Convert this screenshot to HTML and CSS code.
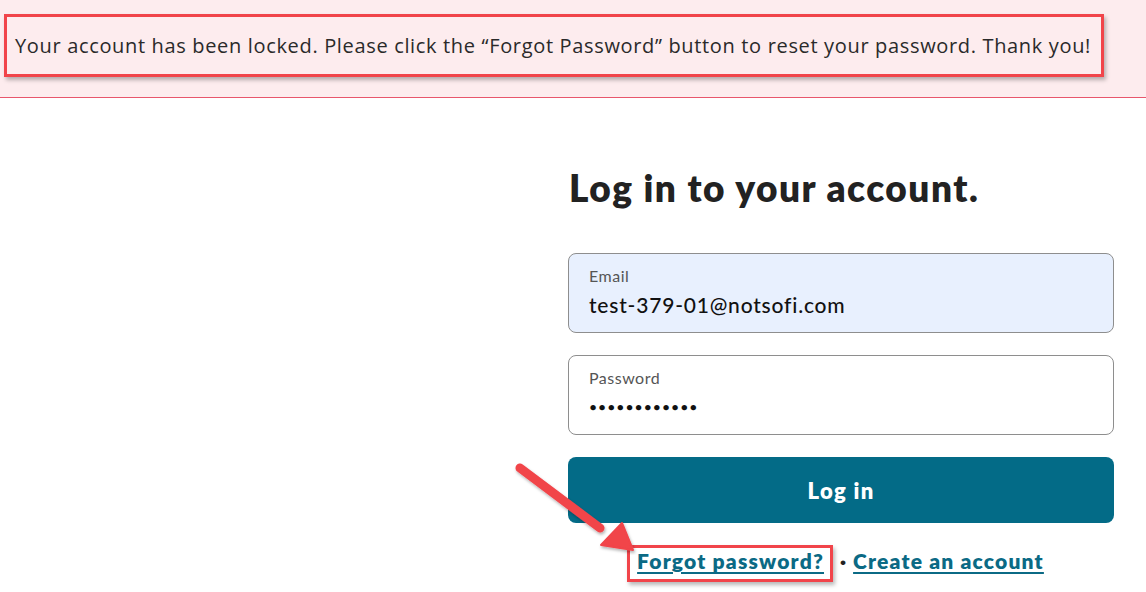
FILE: index.html
```html
<!DOCTYPE html>
<html>
<head>
<meta charset="utf-8">
<link rel="stylesheet" href="styles.css">
</head>
<body>
<div class="banner">
  <div class="notice">Your account has been locked. Please click the “Forgot Password” button to reset your password. Thank you!</div>
</div>
<main class="page">
  <section class="form-col">
    <h1 class="title">Log in to your account.</h1>
    <div class="field field-filled">
      <span class="label">Email</span>
      <span class="value">test-379-01@notsofi.com</span>
    </div>
    <div class="field">
      <span class="label">Password</span>
      <span class="value dots">••••••••••••</span>
    </div>
    <button class="btn">Log in</button>
    <div class="links">
      <span class="highlight"><a class="link" href="#">Forgot password?</a></span>
      <span class="sep">·</span>
      <a class="link" href="#">Create an account</a>
    </div>
  </section>
</main>
<svg class="arrow" width="140" height="100" viewBox="0 0 140 100">
  <defs>
    <filter id="sh" x="-20%" y="-20%" width="140%" height="140%">
      <feDropShadow dx="1" dy="2" stdDeviation="1.5" flood-color="#000" flood-opacity="0.3"/>
    </filter>
  </defs>
  <g filter="url(#sh)" fill="#f1444a" stroke="#f1444a">
    <line x1="20" y1="13" x2="100" y2="73" stroke-width="9" stroke-linecap="round"/>
    <polygon points="133,95 101,90 122,68" stroke-width="2" stroke-linejoin="round"/>
  </g>
</svg>
</body>
</html>
```
FILE: styles.css
```css
* { box-sizing: border-box; }
html, body { margin: 0; padding: 0; background: #fff; }
body { font-family: Lato, "Noto Sans", sans-serif; color: #222; width: 1146px; height: 592px; overflow: hidden; position: relative; }

.banner {
  height: 98px;
  background: #fdecee;
  border-bottom: 1px solid #e8566c;
  padding: 14px 42px 0 4px;
}
.notice {
  height: 63px;
  border: 3px solid #f1444a;
  box-shadow: 2px 3px 4px rgba(0,0,0,0.28);
  padding: 0 0 0 8px;
  display: flex;
  align-items: center;
  font-family: "Open Sans", sans-serif;
  font-size: 20px;
  letter-spacing: 0.66px;
  color: #2a2a2a;
  white-space: nowrap;
}

.page { display: flex; padding-left: 568px; }
.form-col { width: 546px; display: flex; flex-direction: column; }

.title {
  margin: 68px 0 0 1px;
  font-size: 37px;
  font-weight: 800;
  line-height: 44px;
  color: #222;
  letter-spacing: 1.5px;
}

.field {
  margin-top: 26px;
  height: 80px;
  border: 1px solid #8e8e8e;
  border-radius: 8px;
  padding: 12px 20px 0;
  display: flex;
  flex-direction: column;
  background: #fff;
}
.field + .field { margin-top: 22px; }
.field-filled { margin-top: 43px; background: #e8f0fe; }
.label { font-size: 16px; color: #555; line-height: 20px; letter-spacing: 0.5px; }
.value { font-size: 21px; color: #111; line-height: 30px; margin-top: 4px; font-weight: 500; letter-spacing: 0.8px; }
.dots { font-size: 14px; letter-spacing: 1px; }

.btn {
  margin-top: 22px;
  height: 66px;
  border: 0;
  border-radius: 8px;
  background: #036b87;
  color: #fff;
  font-family: inherit;
  font-size: 22px;
  font-weight: 800;
  letter-spacing: 1.3px;
}

.links {
  margin-top: 22px;
  padding-right: 11px;
  display: flex;
  justify-content: center;
  align-items: baseline;
  gap: 7px;
  font-size: 21px;
  font-weight: 800;
}
.link { color: #0b6a85; text-decoration: underline; text-underline-offset: 3px; text-decoration-thickness: 2px; letter-spacing: 1.2px; }
.highlight {
  border: 3px solid #f1444a;
  box-shadow: 2px 3px 4px rgba(0,0,0,0.28);
  padding: 0 6px 6px 7px;
}
.sep { color: #222; }

.arrow { position: absolute; left: 500px; top: 455px; }
```
